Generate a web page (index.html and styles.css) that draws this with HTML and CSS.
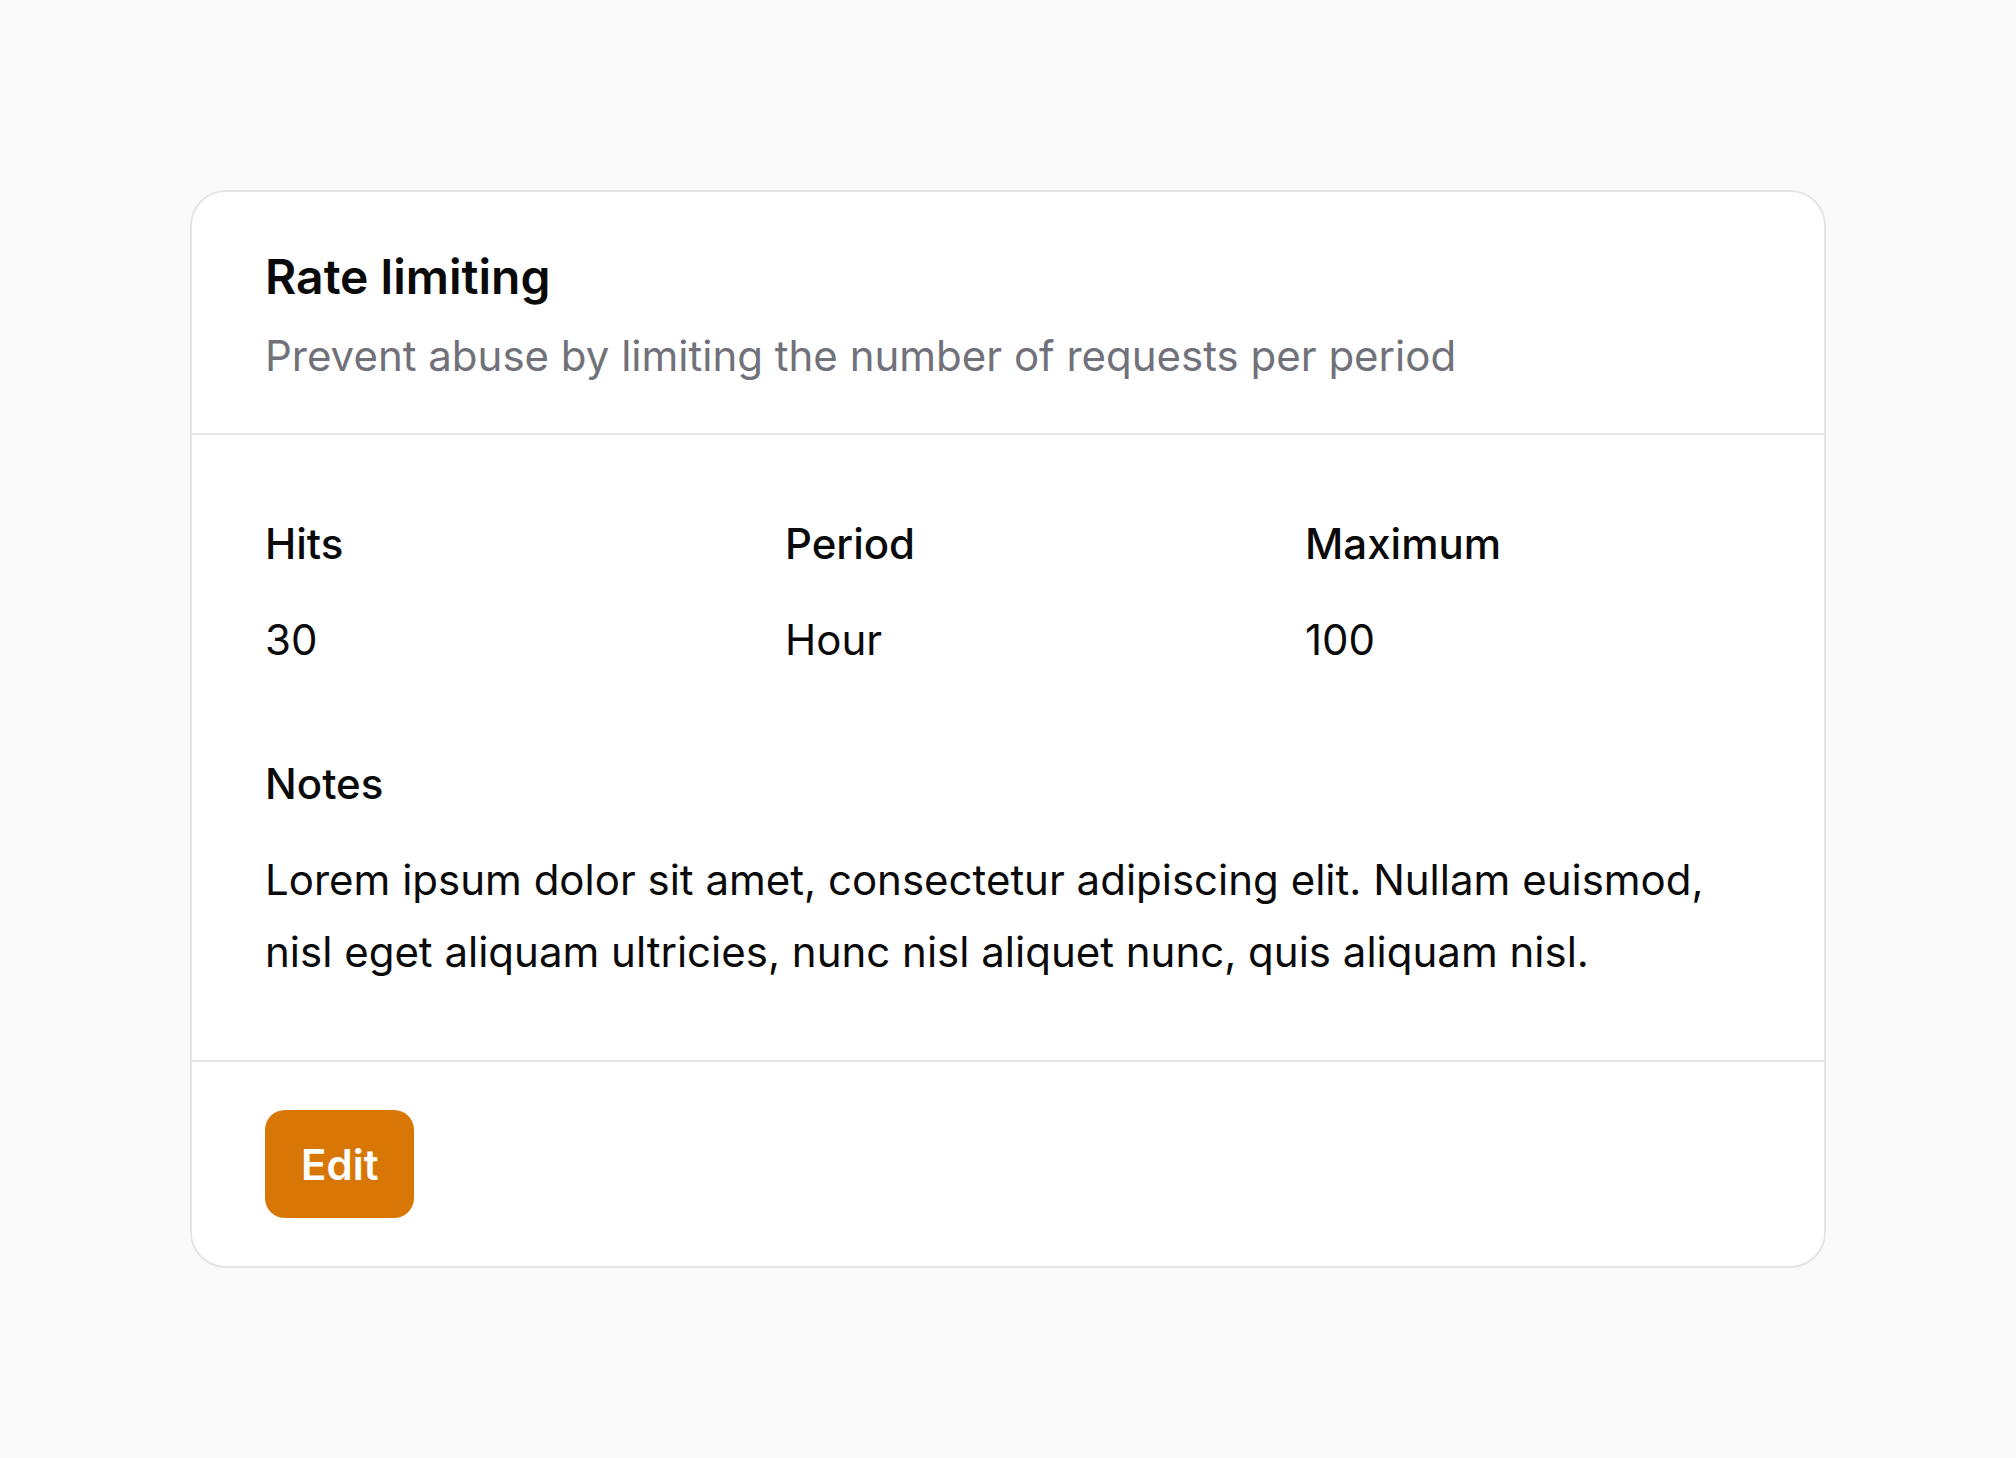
FILE: index.html
```html
<!DOCTYPE html>
<html lang="en">
<head>
<meta charset="utf-8">
<title>Rate limiting</title>
<link rel="stylesheet" href="styles.css">
</head>
<body>
<main class="page">
  <section class="card">
    <header class="card-header">
      <h1 class="card-title">Rate limiting</h1>
      <p class="card-subtitle">Prevent abuse by limiting the number of requests per period</p>
    </header>
    <div class="card-body">
      <dl class="stats">
        <div class="stat">
          <dt class="label">Hits</dt>
          <dd class="value">30</dd>
        </div>
        <div class="stat">
          <dt class="label">Period</dt>
          <dd class="value">Hour</dd>
        </div>
        <div class="stat">
          <dt class="label">Maximum</dt>
          <dd class="value">100</dd>
        </div>
      </dl>
      <div class="notes">
        <h2 class="label">Notes</h2>
        <p class="notes-text">Lorem ipsum dolor sit amet, consectetur adipiscing elit. Nullam euismod, nisl eget aliquam ultricies, nunc nisl aliquet nunc, quis aliquam nisl.</p>
      </div>
    </div>
    <footer class="card-footer">
      <button class="btn-edit" type="button">Edit</button>
    </footer>
  </section>
</main>
</body>
</html>
```

FILE: styles.css
```css
* { box-sizing: border-box; }
html, body { margin: 0; padding: 0; }
body {
  background: #fafafa;
  font-family: Inter, "Noto Sans", sans-serif;
  color: #0a0a0a;
}
.page {
  padding: 190px 190px;
}
.card {
  background: #ffffff;
  border: 2px solid #e5e5e5;
  border-radius: 36px;
  overflow: hidden;
}
.card-header {
  padding: 55px 73px 47px;
  border-bottom: 2px solid #e5e5e5;
}
.card-title {
  margin: 0;
  font-size: 48px;
  line-height: 60px;
  font-weight: 600;
  color: #0a0a0a;
}
.card-subtitle {
  margin: 19px 0 0;
  font-size: 42px;
  line-height: 60px;
  color: #71717a;
}
.card-body {
  padding: 79px 73px 72px;
  border-bottom: 2px solid #e5e5e5;
}
.stats {
  margin: 0;
  display: grid;
  grid-template-columns: repeat(3, 1fr);
  column-gap: 74px;
}
.stat { margin: 0; }
.label {
  margin: 0;
  font-size: 42px;
  line-height: 60px;
  font-weight: 500;
  color: #0a0a0a;
}
.value {
  margin: 36px 0 0;
  font-size: 42px;
  line-height: 60px;
  color: #0a0a0a;
}
.notes { margin-top: 84px; }
.notes-text {
  margin: 30px 0 0;
  font-size: 42px;
  line-height: 72px;
  color: #0a0a0a;
}
.card-footer {
  padding: 48px 73px;
}
.btn-edit {
  display: inline-flex;
  align-items: center;
  justify-content: center;
  height: 108px;
  padding: 0 36px;
  border: none;
  border-radius: 20px;
  background: #d97706;
  color: #ffffff;
  font-family: Inter, "Noto Sans", sans-serif;
  font-size: 42px;
  font-weight: 600;
}
```
